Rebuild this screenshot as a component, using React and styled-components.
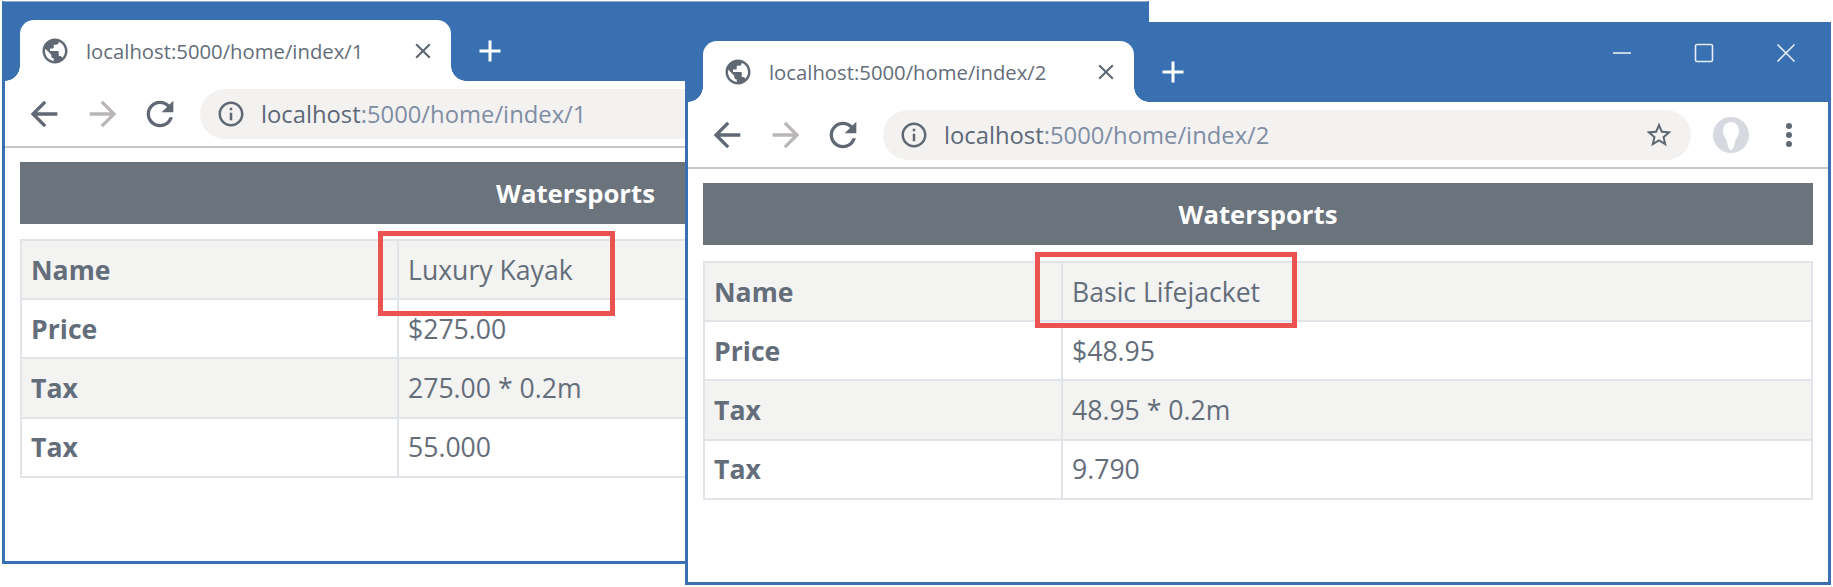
import React from 'react'
import styled, { createGlobalStyle } from 'styled-components'
import { MdPublic, MdClose, MdAdd, MdArrowBack, MdArrowForward, MdRefresh, MdInfoOutline, MdStarBorder } from 'react-icons/md'

const GlobalStyle = createGlobalStyle`
    html, body {
        margin: 0;
        padding: 0;
        background: #ffffff;
    }
`;

const Desktop = styled.div`
    position: relative;
    width: 1833px;
    height: 587px;
    overflow: hidden;
    background: #ffffff;
    font-family: "Open Sans", "Noto Sans", sans-serif;
`;

const Frame = styled.div`
    position: absolute;
    left: ${p => p.$left}px;
    top: ${p => p.$top}px;
    width: ${p => p.$width}px;
    height: 563px;
    box-sizing: border-box;
    display: flex;
    flex-direction: column;
    background: #ffffff;
    border: 3px solid #3870b2;
    border-top: 1px solid ${p => p.$edge};
`;

const TitleBar = styled.div`
    height: 79px;
    flex: none;
    display: flex;
    align-items: flex-end;
    padding-left: 15px;
    background: #3870b2;
`;

const Tab = styled.div`
    position: relative;
    width: 431px;
    height: 61px;
    box-sizing: border-box;
    display: flex;
    align-items: center;
    padding: 0 15px 0 20px;
    background: #ffffff;
    border-radius: 14px 14px 0 0;

    &::before, &::after {
        content: "";
        position: absolute;
        bottom: 0;
        width: 15px;
        height: 15px;
    }
    &::before {
        left: -15px;
        background: radial-gradient(circle at 0 0, #3870b2 14.5px, #ffffff 15px);
    }
    &::after {
        right: -15px;
        background: radial-gradient(circle at 100% 0, #3870b2 14.5px, #ffffff 15px);
    }
`;

const TabTitle = styled.span`
    margin-left: 16px;
    font-size: 20.3px;
    color: #646d7a;
    white-space: nowrap;
`;

const TabClose = styled(MdClose)`
    margin-left: auto;
    color: #5f6873;
`;

const NewTab = styled(MdAdd)`
    margin: 0 0 12px 21px;
    color: #ffffff;
`;

const Controls = styled.div`
    margin-left: auto;
    align-self: flex-start;
    display: flex;
    gap: ${p => p.$gap}px;
    padding: 20px 32px 0 0;
`;

const Toolbar = styled.div`
    height: 65px;
    flex: none;
    box-sizing: content-box;
    display: flex;
    align-items: center;
    padding: 0 14px 0 19px;
    border-bottom: 2px solid #c9c5c5;
    background: #ffffff;
`;

const NavIcon = styled.span`
    display: flex;
    width: 40px;
    flex: none;
    margin-right: ${p => p.$gap}px;
    color: ${p => p.$muted ? '#bab6b6' : '#5f6873'};
`;

const AddressBar = styled.div`
    flex: none;
    width: 808px;
    height: 50px;
    box-sizing: border-box;
    display: flex;
    align-items: center;
    padding: 0 17px 0 16px;
    border-radius: 25px;
    background: #f3f2f1;
    color: #5f6873;
`;

const Url = styled.span`
    margin-left: 15px;
    font-size: 23.8px;
    color: #808da3;
    white-space: nowrap;
`;

const Host = styled.span`
    color: #5d6878;
`;

const StarIcon = styled(MdStarBorder)`
    margin-left: auto;
`;

const Avatar = styled.svg`
    margin-left: 22px;
    flex: none;
`;

const MenuDots = styled.div`
    margin-left: 37px;
    display: flex;
    flex-direction: column;
    gap: 3px;

    & > i {
        display: block;
        width: 6px;
        height: 6px;
        border-radius: 50%;
        background: #5f6873;
    }
`;

const Content = styled.div`
    flex: 1;
    padding: 14px 15px 0;
    background: #ffffff;
`;

const Banner = styled.div`
    height: 62px;
    display: flex;
    align-items: center;
    justify-content: center;
    background: #6b737d;
    color: #ffffff;
    font-size: 25.7px;
    font-weight: 700;
`;

const DetailTable = styled.table`
    width: 100%;
    margin-top: ${p => p.$gap}px;
    border-collapse: collapse;
    table-layout: fixed;
    font-size: 26.6px;
    color: #646d7a;
`;

const Row = styled.tr`
    height: 59.2px;
    background: ${p => p.$striped ? '#f3f3f2' : '#ffffff'};
`;

const Label = styled.th`
    width: ${p => p.$width}px;
    box-sizing: border-box;
    padding: 0 9px;
    border: 2px solid #e1e4e9;
    text-align: left;
    font-weight: 700;
`;

const Value = styled.td`
    padding: 0 9px;
    border: 2px solid #e1e4e9;
`;

const Highlight = styled.div`
    position: absolute;
    left: ${p => p.$left}px;
    top: ${p => p.$top}px;
    width: ${p => p.$width}px;
    height: ${p => p.$height}px;
    box-sizing: border-box;
    border: 5px solid #ea5350;
`;

const WindowControls = () => (
    <Controls $gap={62}>
        <svg width="20" height="20" viewBox="0 0 20 20"><path d="M1 10h18" stroke="#e6ecf5" strokeWidth="1.6" /></svg>
        <svg width="20" height="20" viewBox="0 0 20 20"><rect x="1.5" y="1.5" width="17" height="17" rx="1.5" fill="none" stroke="#e6ecf5" strokeWidth="1.6" /></svg>
        <svg width="20" height="20" viewBox="0 0 20 20"><path d="M1.5 1.5l17 17M18.5 1.5l-17 17" stroke="#e6ecf5" strokeWidth="1.6" /></svg>
    </Controls>
);

// only the top edge of these shows above the second window
const ClippedControls = () => (
    <Controls $gap={0}>
        <svg width="100" height="3" viewBox="0 0 100 3">
            <rect x="0" y="0" width="18" height="2" fill="#e6ecf5" />
            <rect x="82" y="0" width="3" height="2" fill="#c4d3e8" />
            <rect x="98" y="0" width="2" height="2" fill="#c4d3e8" />
        </svg>
    </Controls>
);

const BrowserWindow = ({ page, left, top, width, labelWidth, clipped, tableGap, highlight, product }) => (
    <Frame $left={left} $top={top} $width={width} $edge={clipped ? '#8fa9cf' : '#3870b2'}>
        <TitleBar>
            <Tab>
                <MdPublic size={30} color="#5f6873" />
                <TabTitle>localhost:5000/home/index/{page}</TabTitle>
                <TabClose size={26} />
            </Tab>
            <NewTab size={36} />
            {clipped ? <ClippedControls /> : <WindowControls />}
        </TitleBar>
        <Toolbar>
            <NavIcon $gap={19}><MdArrowBack size={40} /></NavIcon>
            <NavIcon $gap={17} $muted><MdArrowForward size={40} /></NavIcon>
            <NavIcon $gap={20}><MdRefresh size={40} /></NavIcon>
            <AddressBar>
                <MdInfoOutline size={30} />
                <Url><Host>localhost</Host>:5000/home/index/{page}</Url>
                <StarIcon size={30} />
            </AddressBar>
            <Avatar width="36" height="36" viewBox="0 0 36 36">
                <circle cx="18" cy="18" r="18" fill="#d6d9df" />
                <path d="M18 5c-5 0-8 4-8 9 0 5 3 7 4 11 .5 3 2 8 4 8s3.500-5 4-8c1-4 4-6 4-11 0-5-3-9-8-9z" fill="#ffffff" />
            </Avatar>
            <MenuDots><i /><i /><i /></MenuDots>
        </Toolbar>
        <Content>
            <Banner>Watersports</Banner>
            <DetailTable $gap={tableGap}>
                <tbody>
                    {product.map((row, i) => (
                        <Row key={i} $striped={i % 2 === 0}>
                            <Label $width={labelWidth}>{row[0]}</Label>
                            <Value>{row[1]}</Value>
                        </Row>
                    ))}
                </tbody>
            </DetailTable>
        </Content>
        <Highlight $left={highlight[0]} $top={highlight[1]} $width={highlight[2]} $height={highlight[3]} />
    </Frame>
);

const kayak = [['Name', 'Luxury Kayak'], ['Price', '$275.00'], ['Tax', '275.00 * 0.2m'], ['Tax', '55.000']];
const lifejacket = [['Name', 'Basic Lifejacket'], ['Price', '$48.95'], ['Tax', '48.95 * 0.2m'], ['Tax', '9.790']];

const App = () => {
    return (
        <Desktop>
            <GlobalStyle />
            <BrowserWindow page={1} left={2} top={1} width={1147} labelWidth={377} clipped tableGap={15} highlight={[373, 229, 237, 85]} product={kayak} />
            <BrowserWindow page={2} left={685} top={22} width={1146} labelWidth={358} tableGap={16} highlight={[347, 229, 262, 76]} product={lifejacket} />
        </Desktop>
    );
};

export default App;
